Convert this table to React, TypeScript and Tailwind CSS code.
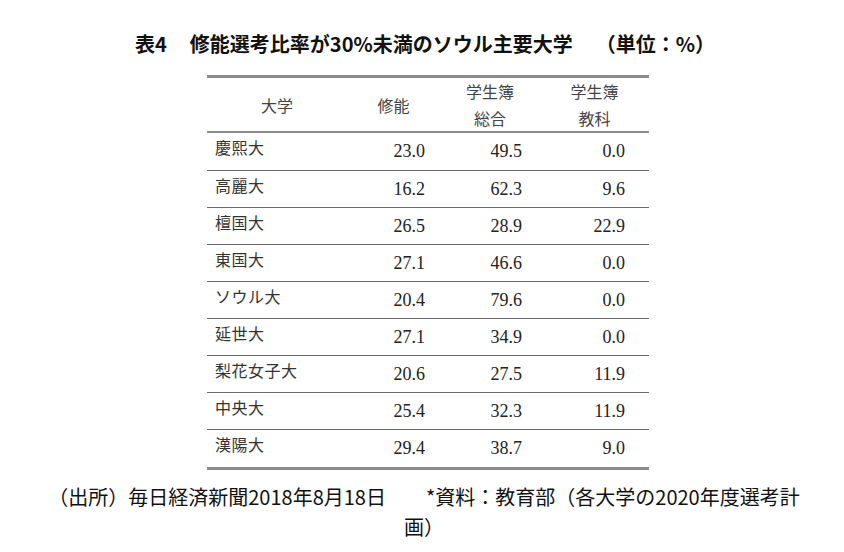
import React from 'react';

const ROWS = [
  { name: '慶熙大', suneung: '23.0', sogo: '49.5', kyoka: '0.0' },
  { name: '高麗大', suneung: '16.2', sogo: '62.3', kyoka: '9.6' },
  { name: '檀国大', suneung: '26.5', sogo: '28.9', kyoka: '22.9' },
  { name: '東国大', suneung: '27.1', sogo: '46.6', kyoka: '0.0' },
  { name: 'ソウル大', suneung: '20.4', sogo: '79.6', kyoka: '0.0' },
  { name: '延世大', suneung: '27.1', sogo: '34.9', kyoka: '0.0' },
  { name: '梨花女子大', suneung: '20.6', sogo: '27.5', kyoka: '11.9' },
  { name: '中央大', suneung: '25.4', sogo: '32.3', kyoka: '11.9' },
  { name: '漢陽大', suneung: '29.4', sogo: '38.7', kyoka: '9.0' },
];

const GOTHIC = "font-['Noto_Sans_CJK_JP','Noto_Sans',sans-serif]";
const SERIF = "font-['Liberation_Serif',serif]";

export default function App() {
  return (
    <div className={`w-[844px] h-[552px] bg-white text-[#222] overflow-hidden ${GOTHIC}`}>
      {/* title */}
      <h1 className="pt-[32px] pl-[6px] text-center text-[20px] leading-[24px] font-bold text-[#111]">
        表4<span className="inline-block w-[23px]" />修能選考比率が30%未満のソウル主要大学<span className="inline-block w-[23px]" />（単位：%）
      </h1>

      {/* table */}
      <div className="mt-[19px] ml-[207px] w-[442px] border-t-[3px] border-b-[3px] border-[#8c8c8c]">
        <div className="grid grid-cols-[140px_93px_100px_109px] h-[55px] border-b-2 border-[#8c8c8c] text-[16px] text-[#444] leading-[27px] items-center text-center">
          <div>大学</div>
          <div>修能</div>
          <div>学生簿<br />総合</div>
          <div>学生簿<br />教科</div>
        </div>
        {ROWS.map((r, i) => (
          <div
            key={r.name}
            className={`grid grid-cols-[140px_93px_100px_109px] ${i === 0 ? 'h-[38px]' : 'h-[37px]'} ${i < ROWS.length - 1 ? 'border-b border-[#6a6a6a]' : ''}`}
          >
            <div className="pl-[8px] pt-[4px] text-[16px] leading-[20px] text-[#333] tracking-[0.5px]">{r.name}</div>
            <div className={`pr-[15px] pt-[8px] text-right text-[18px] leading-[20px] ${SERIF}`}>{r.suneung}</div>
            <div className={`pr-[18px] pt-[8px] text-right text-[18px] leading-[20px] ${SERIF}`}>{r.sogo}</div>
            <div className={`pr-[24px] pt-[8px] text-right text-[18px] leading-[20px] ${SERIF}`}>{r.kyoka}</div>
          </div>
        ))}
      </div>

      {/* source note */}
      <p className="mt-[12px] pl-[4px] text-center text-[20px] leading-[30px] text-[#111]">
        （出所）毎日経済新聞2018年8月18日　　*資料：教育部（各大学の2020年度選考計
        <br />
        画）
      </p>
    </div>
  );
}
